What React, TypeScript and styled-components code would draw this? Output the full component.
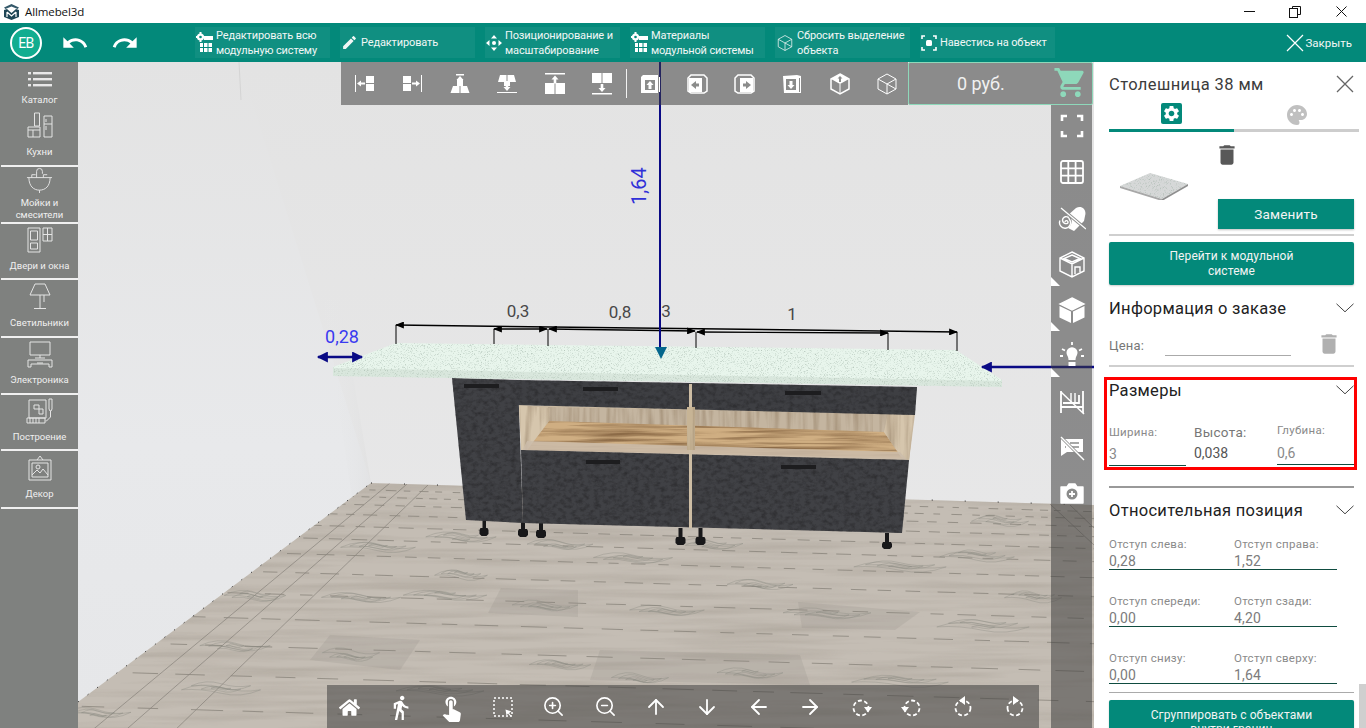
import React from 'react';
import styled, { createGlobalStyle } from 'styled-components';
import { MdUndo, MdRedo, MdEdit, MdDirectionsWalk, MdTouchApp, MdDelete, MdShoppingCart, MdSettings, MdPalette } from 'react-icons/md';
import { FaHome } from 'react-icons/fa';
import { ZoomIn, ZoomOut, ArrowUp, ArrowDown, ArrowLeft, ArrowRight } from 'lucide-react';

const Global = createGlobalStyle`
  html, body { margin: 0; padding: 0; height: 100%; overflow: hidden; background: #fff; }
  body { font-family: Roboto, "Noto Sans", sans-serif; }
  #root { height: 100%; }
  * { box-sizing: border-box; }
`;

const TEAL = '#03897a';

const Page = styled.div`
  width: 1366px; height: 728px; display: flex; flex-direction: column; overflow: hidden; position: relative;
`;
const TitleBar = styled.div`
  height: 23px; display: flex; align-items: center; padding-left: 3px; background: #fff; flex: none;
`;
const AppName = styled.span`
  font: 11.5px "Open Sans", "Noto Sans", sans-serif; color: #111; margin-left: 5px; letter-spacing: -0.1px;
`;
const WinControls = styled.div`
  margin-left: auto; margin-right: 2px; display: flex; height: 23px;
`;
const WinBtn = styled.div`
  width: 46px; display: flex; align-items: center; justify-content: center; color: #111;
`;
const Header = styled.header`
  height: 39px; background: ${TEAL}; display: flex; align-items: center; flex: none; position: relative;
`;
const Avatar = styled.div`
  width: 32px; height: 32px; margin-left: 10px; border-radius: 50%; border: 2px solid #fff; background: #12ad90;
  color: #fff; font-size: 14px; display: flex; align-items: center; justify-content: center; letter-spacing: -.5px; flex: none;
`;
const HistoryBtn = styled.div<{ $ml?: number }>`
  width: 50px; display: flex; justify-content: center; color: #fff; flex: none; margin-left: ${p => p.$ml ?? 0}px;
`;
const ActionRow = styled.div`
  display: flex; gap: 10px; margin-left: 45px; align-items: center;
`;
const ActionBtn = styled.div`
  width: 135px; height: 31px; background: rgba(255,255,255,.055); display: flex; align-items: center; gap: 3px;
  color: #f2f7f6; font-size: 11px; line-height: 15px; padding-left: 1px; white-space: nowrap; letter-spacing: -.13px;
  svg { flex: none; }
`;
const CloseBtn = styled.div`
  margin-left: auto; margin-right: 14px; display: flex; align-items: center; gap: 2px; color: #f2f7f6; font-size: 11.5px;
`;
const Main = styled.div`
  flex: 1; display: flex; min-height: 0;
`;
const Sidebar = styled.nav`
  width: 78px; flex: none; background: #7f817f; display: flex; flex-direction: column;
`;
const SideItem = styled.div<{ $h: number; $pb: number; $line?: boolean }>`
  height: ${p => p.$h}px; padding-bottom: ${p => p.$pb}px; display: flex; flex-direction: column; align-items: center;
  border-bottom: ${p => (p.$line ? '2px solid #f0f0f0' : 'none')}; margin-left: 1px; flex: none;
`;
const SideIcon = styled.div`
  flex: 1; display: flex; align-items: center; justify-content: center; margin-bottom: 4px; min-height: 0;
`;
const SideLabel = styled.div`
  font-size: 9.5px; line-height: 12px; color: #f0f0f0; text-align: center; white-space: pre-line;
`;
const Stage = styled.div`
  flex: 1; position: relative; overflow: hidden; background: #e6e6e6;
`;
const SceneSvg = styled.svg`
  position: absolute; inset: 0; width: 100%; height: 100%; display: block;
`;
const TopOverlay = styled.div`
  position: absolute; left: 263px; top: 0; height: 43px; display: flex;
`;
const BAR = 'rgba(61,61,61,.53)';
const TopTools = styled.div`
  width: 567px; height: 43px; background: ${BAR}; display: flex; align-items: center;
`;
const TopTool = styled.div`
  width: 47.5px; height: 43px; display: flex; align-items: center; justify-content: center; color: #fff; flex: none;
`;
const ToolDivider = styled.div`
  width: 1px; height: 29px; background: #f2f2f2; margin-right: -1px; flex: none;
`;
const PriceBox = styled.div`
  width: 185px; height: 43px; background: ${BAR}; border: 1px solid #8ed8ba; border-radius: 2px; position: relative;
  display: flex; align-items: center; color: #f1f1f1; font-size: 18px; padding-left: 48px;
`;
const CartBadge = styled.div`
  position: absolute; right: 4px; top: 2px; color: #8ed8ba; line-height: 0;
`;
const RightTools = styled.div`
  position: absolute; right: 2px; top: 43px; bottom: 0; width: 41px; background: ${BAR};
  display: flex; flex-direction: column; align-items: center;
`;
const RightToolList = styled.div`
  margin-top: -2px; display: flex; flex-direction: column; align-items: center;
`;
const RightTool = styled.div`
  height: 45.9px; width: 41px; display: flex; align-items: center; justify-content: center; color: #fff; position: relative;
`;
const CornerMark = styled.span`
  position: absolute; left: 0; bottom: 1px; width: 0; height: 0;
  border-left: 9px solid #fff; border-top: 9px solid transparent;
`;
const BottomTools = styled.div`
  position: absolute; left: 249px; bottom: 0; width: 712px; height: 43px; background: ${BAR}; display: flex; align-items: center;
`;
const BottomList = styled.div`
  display: flex; align-items: center; margin-left: -3.5px; margin-top: 1px;
`;
const BottomTool = styled.div`
  width: 51.2px; display: flex; justify-content: center; color: #fff; flex: none;
`;
const Panel = styled.aside`
  width: 272px; flex: none; background: #fff; padding-left: 15px; overflow: hidden; position: relative;
`;
const PanelInner = styled.div`
  width: 245px;
`;
const TitleRow = styled.div`
  height: 44px; display: flex; align-items: center; justify-content: space-between;
`;
const Title = styled.h1`
  margin: 0; font-size: 16.5px; font-weight: 400; color: #3c3c3c; letter-spacing: .4px; white-space: nowrap;
`;
const Tabs = styled.div`
  width: 250px; height: 30px; margin-top: -4px; display: flex;
`;
const Tab = styled.div<{ $on?: boolean }>`
  flex: 1; display: flex; justify-content: center; align-items: flex-start; padding-top: 1px;
  border-bottom: 3px solid ${p => (p.$on ? TEAL : '#cdcdcd')};
  color: ${p => (p.$on ? TEAL : '#c0c0c0')};
`;
const GearBox = styled.div`
  width: 21px; height: 21px; background: ${TEAL}; border-radius: 2px; display: flex; align-items: center; justify-content: center; color: #fff;
`;
const ReplaceRow = styled.div`
  height: 104px; display: flex; border-bottom: 2px solid #cfcfcf; position: relative;
`;
const Thumb = styled.div`
  width: 109px; padding: 40px 0 0 10px;
`;
const ReplaceCol = styled.div`
  flex: 1; display: flex; flex-direction: column; justify-content: space-between; padding-bottom: 5px;
`;
const DarkTrash = styled.div`
  color: #585858; height: 50px; padding-top: 10px; margin-left: -4px; line-height: 0;
`;
const ReplaceBtn = styled.div`
  height: 30px; background: ${TEAL}; color: #f4f4f4; font-size: 13.5px; display: flex; align-items: center; justify-content: center;
  box-shadow: 0 1px 2px rgba(0,0,0,.25); letter-spacing: .2px;
`;
const WideBtn = styled.div<{ $mt: number; $h: number }>`
  height: ${p => p.$h}px; margin-top: ${p => p.$mt}px; background: ${TEAL}; color: #f4f4f4; border-radius: 2px; font-size: 12px; line-height: 14.5px;
  display: flex; align-items: center; justify-content: center; text-align: center; box-shadow: 0 1px 2px rgba(0,0,0,.2); letter-spacing: .1px;
  padding: 0 40px;
`;
const SectionHead = styled.div<{ $mt: number }>`
  display: flex; justify-content: space-between; align-items: center; height: 22px; margin-top: ${p => p.$mt}px;
  font-size: 16.5px; color: #222; letter-spacing: .3px; white-space: nowrap;
`;
const PriceRow = styled.div`
  height: 42px; margin-top: 6px; display: flex; align-items: flex-start; border-bottom: 2px solid #cfcfcf; position: relative;
`;
const PriceLabel = styled.span`
  font-size: 13px; color: #777; margin-top: 13px; letter-spacing: .2px; width: 56px;
`;
const PriceInput = styled.span`
  width: 126px; height: 31px; border-bottom: 1px solid #aaa;
`;
const GrayTrash = styled.div`
  color: #b0b0b0; margin: 6px 0 0 25px; line-height: 0;
`;
const Highlight = styled.section`
  margin: 10px -3px 0 -5px; height: 93px; border: 3px solid #f00; padding: 0 0 0 2px; width: 253px; position: relative;
`;
const SizeGrid = styled.div`
  display: grid; grid-template-columns: 85px 83px 77px; margin-top: 21px;
`;
const SizeCell = styled.div<{ $mt?: number }>`
  margin-top: ${p => p.$mt ?? 0}px;
`;
const FieldLabel = styled.div`
  font-size: 11.5px; line-height: 14px; color: #8a8a8a; letter-spacing: .3px; white-space: nowrap;
`;
const BigLabel = styled.div`
  font-size: 13.5px; line-height: 16px; color: #777; letter-spacing: .3px;
`;
const FieldValue = styled.div<{ $w: number; $pt: number }>`
  width: ${p => p.$w}px; font-size: 14px; line-height: 17px; padding: ${p => p.$pt}px 0 2px; color: #8a8a8a; border-bottom: 1px solid #0f4c40;
`;
const StaticValue = styled.div`
  font-size: 14px; line-height: 17px; margin-top: 5px; color: #555;
`;
const Rule = styled.div<{ $mt: number; $c: string; $t: number }>`
  margin-top: ${p => p.$mt}px; height: ${p => p.$t}px; background: ${p => p.$c};
`;
const OffsetGrid = styled.div`
  display: grid; grid-template-columns: 125px 103px; row-gap: 24px; margin-top: 16px;
`;
const OffsetValue = styled.div`
  font-size: 14px; line-height: 15px; padding-top: 2px; margin-top: 1px; color: #7c7c7c; border-bottom: 1px solid #0f4c40; height: 18px; letter-spacing: .2px;
`;
const ScrollThumb = styled.div`
  position: absolute; right: 0; bottom: 0; width: 7px; height: 44px; background: #cfcfcf;
`;

const Chevron = () => (
  <svg width="18" height="10" viewBox="0 0 18 10" fill="none" stroke="#444" strokeWidth="1"><path d="M.5 .8 9 8.8 17.5 .8" /></svg>
);
const Cross = ({ s = 18, c = '#666', w = 1.3 }: { s?: number; c?: string; w?: number }) => (
  <svg width={s} height={s} viewBox="0 0 18 18" fill="none" stroke={c} strokeWidth={w}><path d="M1 1 17 17M17 1 1 17" /></svg>
);

const Logo = () => (
  <svg width="17" height="16" viewBox="0 0 17 16">
    <path d="M8.5 0 16 3.4 14.6 5 8.5 2.4 2.4 5 1 3.4Z" fill="#35596a" />
    <path d="M1 6 4 5 8.5 9 13 5 16 6V13L8.5 16 1 13Z" fill="#1f4656" />
    <path d="M4 8V13M13 8V13M4 8 8.5 12 13 8" stroke="#fff" strokeWidth="1.2" fill="none" />
  </svg>
);

const SideSvg = ({ w = 30, h = 28, dw, dh, children }: { w?: number; h?: number; dw?: number; dh?: number; children: React.ReactNode }) => (
  <svg width={dw ?? w} height={dh ?? h} viewBox={`0 0 ${w} ${h}`} fill="none" stroke="#e4e4e4" strokeWidth="1">{children}</svg>
);
const sideIcons: React.ReactNode[] = [
  <svg key="c" width="24" height="22" viewBox="0 0 24 22" style={{ marginTop: 8 }} fill="#e8e8e8"><rect x="0" y="3" width="3" height="2.4" /><rect x="5" y="3" width="19" height="2.4" /><rect x="0" y="9" width="3" height="2.4" /><rect x="5" y="9" width="19" height="2.4" /><rect x="0" y="15" width="3" height="2.4" /><rect x="5" y="15" width="19" height="2.4" /></svg>,
  <SideSvg key="k" w={26} h={26}><path d="M7.5 1h5v13h-5zM1 15h12v10H1zM1 18h12M6 18v7M17 4h8v21h-8zM17 12h8M19 7v3M19 14v4" /></SideSvg>,
  <SideSvg key="s" w={28} h={28} dw={27} dh={27}><path d="M1 11h26M3 11c0 9 5 13 11 13s11-4 11-13M14 24v3M11 11V4.500a3 3 0 0 1 6 0V7M6 11V8h4M18 11V8h4" /></SideSvg>,
  <SideSvg key="d" w={26} h={26}><path d="M1 1h12v24H1zM3.500 4h7v9h-7zM3.500 16h7v6h-7zM16 1h9v13h-9zM20.500 1v13M16 7.500h9" /></SideSvg>,
  <SideSvg key="l" w={22} h={27}><path d="M6 1h10l5 11H1zM11 12v13M5 25.500h12M15 12v7" /></SideSvg>,
  <SideSvg key="t" w={26} h={27}><path d="M3 1h20v13H3zM13 14v3M8 17h10M1 19h24v7h-3v-3H4v3H1zM10 22h6" /></SideSvg>,
  <SideSvg key="b" w={28} h={27}><path d="M3 2h17v18H3zM8 7h5v4h4v5h-4v-5H8zM1 20h18v5H1zM4 20v5M7 20v5M10 20v5M13 20v5M23 1h3v10l-1 2h-1l-1-2zM24.500 13v6l-4 4h-1" /></SideSvg>,
  <SideSvg key="f" w={24} h={27}><path d="M1 6h22v20H1zM4 9h16v14H4zM9 6l3-4 3 4M4 21l5-5 3 3 3-4 5 6" /><circle cx="10" cy="13" r="2" /></SideSvg>,
];
const sideItems = [
  { t: 'Каталог', h: 46, pb: 2, line: false },
  { t: 'Кухни', h: 59, pb: 7, line: true },
  { t: 'Мойки и\nсмесители', h: 57, pb: 1, line: true },
  { t: 'Двери и окна', h: 56, pb: 6, line: true },
  { t: 'Светильники', h: 58, pb: 7, line: true },
  { t: 'Электроника', h: 57, pb: 7, line: true },
  { t: 'Построение', h: 56, pb: 6, line: true },
  { t: 'Декор', h: 58, pb: 7, line: true },
];

const ModuleIcon = () => (
  <svg width="17" height="21" viewBox="0 0 17 21" fill="#fff">
    <circle cx="4.500" cy="5" r="3.600" /><circle cx="4.500" cy="5" r="1.300" fill={TEAL} />
    <path d="M3.500 0h2v2h-2zM3.500 8h2v2h-2zM0 4h2v2H0zM7 4h2v2H7z" />
    <rect x="8" y="4" width="9" height="4" />
    <rect x="4" y="11" width="12" height="9" /><path d="M7.500 11v9M12 11v9M4 15.500h12" stroke={TEAL} strokeWidth="1" />
  </svg>
);
const MoveIcon = () => (
  <svg width="16" height="16" viewBox="0 0 16 16" fill="#fff">
    <path d="M8 0 11 3.500H5zM8 16l3-3.500H5zM0 8l3.500-3v6zM16 8l-3.500-3v6z" /><circle cx="8" cy="8" r="2" />
  </svg>
);
const CubeWire = ({ s = 18, w = 1 }: { s?: number; w?: number }) => (
  <svg width={s} height={s} viewBox="0 0 24 24" fill="none" stroke="currentColor" strokeWidth={w}>
    <path d="M12 2 21 7V17L12 22 3 17V7ZM3 7 12 12 21 7M12 12V22M12 12 21 17" />
  </svg>
);
const TargetIcon = () => (
  <svg width="16" height="16" viewBox="0 0 16 16" fill="none" stroke="#fff" strokeWidth="1.600">
    <path d="M1 4V1h3M12 1h3v3M15 12v3h-3M4 15H1v-3" /><rect x="5" y="5" width="6" height="6" rx="1.500" fill="#fff" stroke="none" />
  </svg>
);

const T = ({ children }: { children: React.ReactNode }) => (
  <svg width="24" height="24" viewBox="0 0 24 24" fill="#fff">{children}</svg>
);
const up = (x: number, y: number) => `M${x} ${y}l-3.500 4h2.200v4h2.600v-4h2.200z`;
const down = (x: number, y: number) => `M${x} ${y}l-3.500-4h2.200v-4h2.600v4h2.200z`;
const topIcons: React.ReactNode[] = [
  <T key="1"><rect x="2" y="3" width="1" height="17" /><path d="M4 11.500 8 8.500v2h4v2H8v2z" /><rect x="13" y="4" width="8" height="7" /><rect x="13" y="12" width="8" height="7" /></T>,
  <T key="2"><rect x="21" y="3" width="1" height="17" /><path d="M20 11.500 16 8.500v2h-4v2h4v2z" /><rect x="3" y="4" width="8" height="7" /><rect x="3" y="12" width="8" height="7" /></T>,
  <T key="3"><rect x="8" y="2" width="8" height="1.500" /><path d={up(12, 4)} /><rect x="9" y="7" width="6" height="7" /><path d="M5 14h6.500v7H2.500zM12.500 14H19l2.500 7h-9z" /></T>,
  <T key="4"><rect x="2" y="20" width="20" height="1" /><path d="M5 3h6.500v7H3zM12.500 3H19l2 7h-8.500z" /><rect x="9" y="9" width="6" height="5" /><path d={down(12, 19)} /></T>,
  <T key="5"><rect x="2" y="1" width="20" height="1.500" /><path d={up(12, 3.500)} /><rect x="2" y="11" width="9.500" height="11" /><rect x="12.500" y="11" width="9.500" height="11" /></T>,
  <T key="6"><rect x="2" y="1" width="9.500" height="10" /><rect x="12.500" y="1" width="9.500" height="10" /><path d={down(12, 20)} /><rect x="2" y="21" width="20" height="1.500" /></T>,
  <T key="7"><path d="M5 3h15v18H3V5z" /><path d="M21.500 5v15" stroke="#fff" /><rect x="7" y="8" width="10" height="10" fill="#8b8c8b" /><path d="M12 9l-3.500 4h2v4h3v-4h2z" /></T>,
  <T key="8"><path d="M6 3h13l3 3v13l-3 2H6l-3-2V6z" fill="none" stroke="#fff" strokeWidth="1.500" /><path d="M4 6h13v14H4z" /><path d="M6 13l5-4v2.500h3v3h-3V17z" fill="#8b8c8b" /></T>,
  <T key="9"><path d="M5 3h13l3 3v13l-3 2H5l-3-2V6z" fill="none" stroke="#fff" strokeWidth="1.500" /><path d="M7 6h13v14H7z" /><path d="M18 13l-5-4v2.500h-3v3h3V17z" fill="#8b8c8b" /></T>,
  <T key="10"><path d="M3 4 17 3l4 1V21H4z" /><path d="M19.500 6v14" stroke="#8b8c8b" /><rect x="6" y="7" width="10" height="11" fill="#8b8c8b" /><path d="M11 17l3.500-4h-2V9h-3v4h-2z" /></T>,
  <T key="11"><path d="M12 2 21 7V17L12 22 3 17V7Z" fill="none" stroke="#fff" strokeWidth="1.500" /><path d="M12 2 21 7 12 12 3 7Z" /><path d="M12 12V22" stroke="#fff" /><path d="M12 4l-2.500 2.500h1.500V10h2V6.500h1.500z" fill="#8b8c8b" /></T>,
  <span key="12" style={{ display: 'flex', color: '#fff' }}><CubeWire s={24} /></span>,
];

const Spin = ({ flip, top }: { flip?: boolean; top?: boolean }) => (
  <svg width="22" height="22" viewBox="0 0 22 22" fill="none" stroke="#fff" strokeWidth="1.800" style={flip ? { transform: 'scaleX(-1)' } : undefined}>
    <circle cx="11" cy="12" r="7.500" strokeDasharray="4 2.400" />
    {top ? <path d="M13 0v9L7 4.500z" fill="#fff" stroke="none" /> : <path d="M14 11h8l-4 5.500z" fill="#fff" stroke="none" />}
  </svg>
);
const SelectIcon = () => (
  <svg width="22" height="22" viewBox="0 0 22 22" fill="none" stroke="#fff">
    <rect x="2" y="2" width="18" height="18" strokeWidth="1.500" strokeDasharray="2 2" />
    <path d="M13.500 13.500 19.500 15.500 17 17 19.500 20 18.500 20.500 16 17.500 14.500 19.500Z" fill="#fff" stroke="none" />
  </svg>
);
const bottomIcons: React.ReactNode[] = [
  <FaHome key="h" size={21} />,
  <MdDirectionsWalk key="w" size={27} />,
  <MdTouchApp key="t" size={29} />,
  <SelectIcon key="s" />,
  <ZoomIn key="zi" size={23} strokeWidth={1.700} style={{ transform: 'translateY(-1px)' }} />,
  <ZoomOut key="zo" size={23} strokeWidth={1.700} style={{ transform: 'translateY(-1px)' }} />,
  <ArrowUp key="au" size={24} strokeWidth={1.800} />,
  <ArrowDown key="ad" size={24} strokeWidth={1.800} />,
  <ArrowLeft key="al" size={24} strokeWidth={1.800} />,
  <ArrowRight key="ar" size={24} strokeWidth={1.800} />,
  <Spin key="r1" />,
  <Spin key="r2" flip />,
  <Spin key="r3" top />,
  <Spin key="r4" top flip />,
];

const R = ({ children }: { children: React.ReactNode }) => (
  <svg width="28" height="28" viewBox="0 0 28 28" fill="none" stroke="#fff" strokeWidth="1.400">{children}</svg>
);
const rightIcons: { n: React.ReactNode; mark?: boolean }[] = [
  { n: <R><path d="M4 9V4h5M19 4h5v5M24 19v5h-5M9 24H4v-5" strokeWidth="2.600" /></R> },
  { n: <R><rect x="3" y="3" width="22" height="22" rx="2" strokeWidth="1.800" /><path d="M10.300 3v22M17.600 3v22M3 10.300h22M3 17.600h22" strokeWidth="1.800" /></R> },
  { n: <R><path d="M9 12 18 4C24 1 29 6 27 12L26 17 16 27 10 24C14 21 15 16 12 13Z" fill="#fff" stroke="none" /><path d="M7 18a1.500 1.500 0 1 1 2 1.500 3.500 3.500 0 1 1 2.500-4 5.500 5.500 0 1 1-9.500 1" /><path d="M3 4l25 21" stroke="#8b8c8b" strokeWidth="3" /><path d="M3 4l25 21" stroke="#fff" strokeWidth="1.300" /></R> },
  { n: <R><path d="M14 2 26 8V21L14 27 2 21V8ZM2 8 14 14 26 8M14 5 22 8.500 14 12 6 8.500ZM14 14V27M17 24V17h5v5" /></R>, mark: true },
  { n: <R><path d="M14 2 26 8 14 14 2 8Z" fill="#fff" /><path d="M1.500 10 13 15.500V27L1.500 21.500Z M26.500 10 15 15.500V27L26.500 21.500Z" fill="#fff" stroke="none" /></R>, mark: true },
  { n: <R><path d="M9 14a5.500 5.500 0 1 1 10 0c-1 2-1.500 3-1.500 5h-7c0-2-.5-3-1.500-5z" fill="#fff" stroke="none" /><path d="M10.500 21h7v4h-7z" fill="#fff" stroke="none" /><path d="M14 1v3M4 8l3 1.500M24 8l-3 1.500M2 15h3M23 15h3" strokeWidth="1.800" /></R>, mark: true },
  { n: <R><path d="M3 4v22M25 4v22M3 20h22M5 16h16V8" strokeWidth="1.800" /><path d="M13 16V6M17 16V6" /><path d="M3 5l23 22" strokeWidth="1.500" /></R> },
  { n: <R><path d="M3 6h22v13H9l-6 4z" fill="#fff" stroke="none" /><path d="M12 10h9M12 14h9M7 14h1" stroke="#8b8c8b" strokeWidth="1.500" /><path d="M3 4l23 23" stroke="#8b8c8b" strokeWidth="3" /><path d="M3 4l23 23" /></R> },
  { n: <R><path d="M3 8h6l2-3h6l2 3h6v16H3z" fill="#fff" stroke="#fff" strokeLinejoin="round" /><circle cx="14" cy="15" r="5.500" fill="#8b8c8b" stroke="none" /><path d="M14 12v6M11 15h6" stroke="#fff" strokeWidth="1.800" /></R> },
];

function rng(seed: number) {
  let s = seed;
  return () => {
    s = (s * 16807) % 2147483647;
    return (s - 1) / 2147483646;
  };
}
const rowYs = [490, 497, 505, 515, 527, 540, 556, 575, 597, 622, 650, 680, 715];
const dashPath = (() => {
  const r = rng(12345);
  let d = '';
  rowYs.forEach(y0 => {
    const k = 0.6 + (y0 - 480) / 150;
    let x = 78 + r() * 10;
    while (x < 1094) {
      const len = (9 + r() * 8) * k;
      const y = y0 + 0.03 * (x - 371);
      d += `M${x.toFixed(1)} ${y.toFixed(1)}L${(x + len).toFixed(1)} ${(y + len * 0.03).toFixed(1)}`;
      x += len + (8 + r() * 8) * k;
    }
  });
  return d;
})();
const grainSpots: [number, number, number][] = [
  [378, 548, 34], [461, 537, 32], [255, 595, 28], [361, 597, 36], [445, 593, 38], [461, 573, 24], [545, 607, 30],
  [235, 647, 32], [351, 655, 26], [221, 688, 36], [98, 713, 30], [633, 558, 36], [710, 545, 30], [760, 585, 30],
  [827, 615, 40], [983, 625, 42], [667, 610, 34], [900, 567, 42], [977, 555, 34], [750, 673, 30], [900, 680, 44],
  [1033, 597, 26], [640, 680, 26], [560, 545, 30], [1000, 520, 26], [860, 525, 24], [440, 690, 40], [560, 665, 28],
];
const grainPath = (() => {
  const r = rng(777);
  let d = '';
  grainSpots.forEach(([cx, cy, w]) => {
    for (let i = 1; i <= 4; i++) {
      const a = (w * 1.1 * i) / 4;
      const b = 0.6 + i * 0.9;
      const off = (r() - 0.5) * 5;
      d += `M${(cx - a).toFixed(1)} ${cy + off}q${(a * 0.5).toFixed(1)} ${(-2 * b).toFixed(1)} ${a.toFixed(1)} ${(-0.6 * b).toFixed(1)}t${a.toFixed(1)} ${(0.6 * b).toFixed(1)}q${(-a * 0.5).toFixed(1)} ${(2 * b).toFixed(1)} ${(-a).toFixed(1)} ${(0.8 * b).toFixed(1)}t${(-a).toFixed(1)} ${(-0.8 * b).toFixed(1)}`;
    }
  });
  return d;
})();

const Scene = () => (
  <SceneSvg viewBox="78 62 1016 666" preserveAspectRatio="none">
    <defs>
      <linearGradient id="back" x1="0" y1="0" x2="0" y2="1"><stop offset="0" stopColor="#e3e3e3" /><stop offset="1" stopColor="#e9e9ea" /></linearGradient>
      <linearGradient id="left" x1="0" y1="0" x2="0" y2="1"><stop offset="0" stopColor="#e3e3e3" /><stop offset=".6" stopColor="#e8e9eb" /><stop offset="1" stopColor="#e6e7e9" /></linearGradient>
      <linearGradient id="corner" x1="0" y1="0" x2="1" y2="0"><stop offset="0" stopColor="#eceef0" stopOpacity="0" /><stop offset="1" stopColor="#d8d8d8" /></linearGradient>
      <filter id="speck" x="0" y="0" width="100%" height="100%" colorInterpolationFilters="sRGB">
        <feTurbulence type="fractalNoise" baseFrequency="1.300" numOctaves="2" seed="3" />
        <feColorMatrix values="0 0 0 0 .6  0 0 0 0 .68  0 0 0 0 .63  1.800 0 0 0 -.95" />
        <feComposite in2="SourceGraphic" operator="in" result="n" />
        <feMerge><feMergeNode in="SourceGraphic" /><feMergeNode in="n" /></feMerge>
      </filter>
      <filter id="stone" x="0" y="0" width="100%" height="100%" colorInterpolationFilters="sRGB">
        <feTurbulence type="fractalNoise" baseFrequency=".18 .24" numOctaves="4" seed="8" />
        <feColorMatrix values="0 0 0 0 .16  0 0 0 0 .16  0 0 0 0 .17  1.600 0 0 0 -.65" />
        <feComposite in2="SourceGraphic" operator="in" result="n" />
        <feMerge><feMergeNode in="SourceGraphic" /><feMergeNode in="n" /></feMerge>
      </filter>
      <filter id="wood" x="0" y="0" width="100%" height="100%" colorInterpolationFilters="sRGB">
        <feTurbulence type="fractalNoise" baseFrequency=".012 .3" numOctaves="3" seed="5" />
        <feColorMatrix values="0 0 0 0 .55  0 0 0 0 .42  0 0 0 0 .28  2.200 0 0 0 -.8" />
        <feComposite in2="SourceGraphic" operator="in" result="n" />
        <feMerge><feMergeNode in="SourceGraphic" /><feMergeNode in="n" /></feMerge>
      </filter>
      <filter id="planks" x="0" y="0" width="100%" height="100%" colorInterpolationFilters="sRGB">
        <feTurbulence type="fractalNoise" baseFrequency=".15 .012" numOctaves="3" seed="5" />
        <feColorMatrix values="0 0 0 0 .6  0 0 0 0 .52  0 0 0 0 .42  1.600 0 0 0 -.65" />
        <feComposite in2="SourceGraphic" operator="in" result="n" />
        <feMerge><feMergeNode in="SourceGraphic" /><feMergeNode in="n" /></feMerge>
      </filter>
      <filter id="boards" x="0" y="0" width="100%" height="100%" colorInterpolationFilters="sRGB">
        <feTurbulence type="fractalNoise" baseFrequency=".006 .12" numOctaves="3" seed="11" />
        <feColorMatrix values="0 0 0 0 .66  0 0 0 0 .63  0 0 0 0 .59  1.200 0 0 0 -.5" />
        <feComposite in2="SourceGraphic" operator="in" result="n" />
        <feMerge><feMergeNode in="SourceGraphic" /><feMergeNode in="n" /></feMerge>
      </filter>
      <clipPath id="floorClip"><path d="M78 702 371 483 1094 505V728H78Z" /></clipPath>
      <marker id="blk" viewBox="0 0 10 8" refX="9" refY="4" markerWidth="9" markerHeight="7" orient="auto-start-reverse" markerUnits="userSpaceOnUse"><path d="M0 0 10 4 0 8Z" fill="#000" /></marker>
      <marker id="navy" viewBox="0 0 10 10" refX="9" refY="5" markerWidth="12" markerHeight="11" orient="auto-start-reverse" markerUnits="userSpaceOnUse"><path d="M0 0 10 5 0 10Z" fill="#0a0a85" /></marker>
    </defs>

    <rect x="78" y="62" width="1016" height="666" fill="url(#back)" />
    <path d="M78 62H240L371 483 78 702Z" fill="url(#left)" />
    <path d="M340 300 371 483 352 497 322 300Z" fill="url(#corner)" opacity=".35" />
    <path d="M239 62 241 100" stroke="#d4d4d4" strokeWidth="1" />

    <path d="M78 702 371 483 1094 505V728H78Z" fill="#c4bdb4" filter="url(#boards)" />
    <g clipPath="url(#floorClip)">
      <path d="M501 588 578 590V617L488 613Z M798 602 920 612 895 630 802 628Z M330 635 420 640 400 670 310 660Z M600 650 800 655 810 685 590 680Z" fill="#8c877f" opacity=".18" />
      <path d="M390 483 78 742M407 484 120 735M428 485 170 735M1050 504 1094 545M1070 505 1094 528" stroke="#6e6a64" strokeWidth=".7" fill="none" opacity=".7" />
      <path d={dashPath} stroke="#8a857c" strokeWidth="1" opacity=".8" fill="none" />
      <path d={grainPath} stroke="#8a8980" strokeWidth=".8" opacity=".45" fill="none" />
    </g>
    <path d="M78 702 371 483" stroke="#222" strokeWidth="1" strokeDasharray="1 11" fill="none" />
    <path d="M371 483 1094 505" stroke="#222" strokeWidth="1" strokeDasharray="1 32" fill="none" />

    <g>
      <path d="M482.500 520h3.500v8h1.500l1 2v4l-2 2h-5l-2-2v-4l1-2h2zM521 522h4v7h2l1 2v4l-2 2h-6l-2-2v-4l1-2h2zM539 523h4v7h2l1 2v4l-2 2h-6l-2-2v-4l1-2h2zM678.500 528h4v9h2l1 2v4l-2 2h-6l-2-2v-4l1-2h2zM698.500 528h4v9h2l1 2v4l-2 2h-6l-2-2v-4l1-2h2zM885 533h4v9h2l1 2v3l-2 2h-6l-2-2v-3l1-2h2z" fill="#18181a" />
      <path d="M452 378 518 380 523 523 466 520Z" fill="#404145" filter="url(#stone)" />
      <path d="M519 405 915 414 909 461 522 450Z" fill="#c9b9a1" />
      <path d="M548 407 890 414 884 434 548 424Z" fill="#c4b5a0" filter="url(#planks)" />
      <path d="M549 421 884 432 903 458 527 450Z" fill="#cfae82" filter="url(#wood)" />
      <path d="M519 405 550 408 549 421 527 450 521 450Z M888 413 914 414 909 460 901 457 884 432Z" fill="#d6c6ad" filter="url(#planks)" />
      <path d="M527 441 900 452 908 461 522 451Z" fill="#cbbcaa" opacity=".85" />
      <path d="M516 380 917 387 915 415 516 405Z" fill="#3e3f43" filter="url(#stone)" />
      <path d="M521 450 909 460 902 533 523 523Z" fill="#404145" filter="url(#stone)" />
      <path d="M689 384H692V528H689Z" fill="#cdbda4" />
      <path d="M687 407H695V450H687Z" fill="#c7b495" filter="url(#planks)" />
      <path d="M464 384H499V388H464ZM583 387H618V391H583ZM785 391H821V395H785ZM586 460H620V464H586ZM781 465H816V469H781Z" fill="#1d1d1f" />
    </g>

    <path d="M333 367 396 343 956 350 1002 380 1002 387 333 376Z" fill="#e8f5ec" filter="url(#speck)" />
    <path d="M333 368 1002 381 1002 387 333 376Z" fill="#b5c7ba" opacity=".3" />

    <g stroke="#000" strokeWidth="1.300" fill="none">
      <path d="M396 325 957 332" strokeWidth="1.500" markerStart="url(#blk)" markerEnd="url(#blk)" />
      <path d="M494 329 547 329" markerStart="url(#blk)" markerEnd="url(#blk)" />
      <path d="M549 329 695 331" markerStart="url(#blk)" markerEnd="url(#blk)" />
      <path d="M697 332 888 333" markerStart="url(#blk)" markerEnd="url(#blk)" />
      <path d="M396 325V344M494 329V344M548 329V346M696 332V348M888 333V350M957 332V351" strokeWidth="1" />
    </g>
    <g fontFamily="Roboto, sans-serif" fontSize="17" fill="#484848" textAnchor="middle">
      <text x="518" y="317">0,3</text>
      <text x="620" y="318">0,8</text>
      <text x="666" y="317">3</text>
      <text x="792" y="320">1</text>
    </g>
    <path d="M660 62V350" stroke="#0a0a85" strokeWidth="2" />
    <path d="M655 347H667L661 359Z" fill="#04668c" />
    <text x="0" y="0" transform="translate(646 205) rotate(-90)" fontFamily="Roboto, sans-serif" fontSize="20" fill="#3030d8">1,64</text>
    <path d="M318 357H362" stroke="#0a0a85" strokeWidth="2.500" markerStart="url(#navy)" markerEnd="url(#navy)" />
    <text x="342" y="343" textAnchor="middle" fontFamily="Roboto, sans-serif" fontSize="18" fill="#3a3af0">0,28</text>
    <path d="M982 367H1094" stroke="#0a0a85" strokeWidth="2.500" markerStart="url(#navy)" />
  </SceneSvg>
);

const offsets = [
  ['Отступ слева:', '0,28'], ['Отступ справа:', '1,52'],
  ['Отступ спереди:', '0,00'], ['Отступ сзади:', '4,20'],
  ['Отступ снизу:', '0,00'], ['Отступ сверху:', '1,64'],
];

export default function App() {
  return (
    <Page>
      <Global />
      <TitleBar>
        <Logo />
        <AppName>Allmebel3d</AppName>
        <WinControls>
          <WinBtn><svg width="11" height="3" viewBox="0 0 11 3"><path d="M0 1.500H11" stroke="#111" /></svg></WinBtn>
          <WinBtn><svg width="12" height="12" viewBox="0 0 12 12" fill="none" stroke="#111"><path d="M3.500 2.500V.5H11.500V8.500H9" /><rect x=".5" y="2.500" width="8" height="9" /></svg></WinBtn>
          <WinBtn><svg width="11" height="11" viewBox="0 0 11 11" stroke="#111"><path d="M.5 .5 10.500 10.500M10.500 .5 .5 10.500" /></svg></WinBtn>
        </WinControls>
      </TitleBar>
      <Header>
        <Avatar>EB</Avatar>
        <HistoryBtn $ml={8}><MdUndo size={28} /></HistoryBtn>
        <HistoryBtn><MdRedo size={28} /></HistoryBtn>
        <ActionRow>
          <ActionBtn><ModuleIcon /><span>Редактировать всю<br />модульную систему</span></ActionBtn>
          <ActionBtn><MdEdit size={17} /><span>Редактировать</span></ActionBtn>
          <ActionBtn><MoveIcon /><span>Позиционирование и<br />масштабирование</span></ActionBtn>
          <ActionBtn><ModuleIcon /><span>Материалы<br />модульной системы</span></ActionBtn>
          <ActionBtn><CubeWire s={18} /><span>Сбросить выделение<br />объекта</span></ActionBtn>
          <ActionBtn><TargetIcon /><span>Навестись на объект</span></ActionBtn>
        </ActionRow>
        <CloseBtn><Cross s={18} c="#fff" w={1.2} /><span>Закрыть</span></CloseBtn>
      </Header>
      <Main>
        <Sidebar>
          {sideItems.map((s, i) => (
            <SideItem key={s.t} $h={s.h} $pb={s.pb} $line={s.line}>
              <SideIcon>{sideIcons[i]}</SideIcon>
              <SideLabel>{s.t}</SideLabel>
            </SideItem>
          ))}
        </Sidebar>
        <Stage>
          <Scene />
          <TopOverlay>
            <TopTools>
              {topIcons.map((n, i) => (
                <React.Fragment key={i}>
                  {i === 6 && <ToolDivider />}
                  <TopTool>{n}</TopTool>
                </React.Fragment>
              ))}
            </TopTools>
            <PriceBox>
              0 руб.
              <CartBadge><MdShoppingCart size={35} /></CartBadge>
            </PriceBox>
          </TopOverlay>
          <RightTools>
            <RightToolList>
              {rightIcons.map((r, i) => (
                <RightTool key={i}>
                  {r.n}
                  {r.mark && <CornerMark />}
                </RightTool>
              ))}
            </RightToolList>
          </RightTools>
          <BottomTools>
            <BottomList>
              {bottomIcons.map((n, i) => <BottomTool key={i}>{n}</BottomTool>)}
            </BottomList>
          </BottomTools>
        </Stage>
        <Panel>
          <PanelInner>
            <TitleRow>
              <Title>Столешница 38 мм</Title>
              <Cross s={18} c="#666" w={1.3} />
            </TitleRow>
            <Tabs>
              <Tab $on><GearBox><MdSettings size={19} /></GearBox></Tab>
              <Tab><MdPalette size={24} /></Tab>
            </Tabs>
            <ReplaceRow>
              <Thumb>
                <svg width="70" height="28" viewBox="0 0 70 28">
                  <path d="M1 14 31 1 69 12 43 27Z" fill="#d6d8d8" filter="url(#speck)" />
                  <path d="M1 14 43 27 43 29 1 16Z" fill="#a8a8a8" />
                  <path d="M43 27 69 12 69 14 43 29Z" fill="#8f8f8f" />
                </svg>
              </Thumb>
              <ReplaceCol>
                <DarkTrash><MdDelete size={26} /></DarkTrash>
                <ReplaceBtn>Заменить</ReplaceBtn>
              </ReplaceCol>
            </ReplaceRow>
            <WideBtn $mt={6} $h={43}>Перейти к модульной системе</WideBtn>
            <SectionHead $mt={12}>Информация о заказе<Chevron /></SectionHead>
            <PriceRow>
              <PriceLabel>Цена:</PriceLabel>
              <PriceInput />
              <GrayTrash><MdDelete size={26} /></GrayTrash>
            </PriceRow>
            <Highlight>
              <SectionHead $mt={-1}>Размеры<Chevron /></SectionHead>
              <SizeGrid>
                <SizeCell $mt={3}>
                  <FieldLabel>Ширина:</FieldLabel>
                  <FieldValue $w={77} $pt={7}>3</FieldValue>
                </SizeCell>
                <SizeCell $mt={2}>
                  <BigLabel>Высота:</BigLabel>
                  <StaticValue>0,038</StaticValue>
                </SizeCell>
                <SizeCell $mt={1}>
                  <FieldLabel>Глубина:</FieldLabel>
                  <FieldValue $w={77} $pt={8}>0,6</FieldValue>
                </SizeCell>
              </SizeGrid>
            </Highlight>
            <Rule $mt={16} $c="#999" $t={2} />
            <SectionHead $mt={11}>Относительная позиция<Chevron /></SectionHead>
            <OffsetGrid>
              {offsets.map(([l, v]) => (
                <div key={l}>
                  <FieldLabel>{l}</FieldLabel>
                  <OffsetValue>{v}</OffsetValue>
                </div>
              ))}
            </OffsetGrid>
            <Rule $mt={8} $c="#aaa" $t={1} />
            <WideBtn $mt={7} $h={44}>Сгруппировать с объектами внутри границ</WideBtn>
          </PanelInner>
          <ScrollThumb />
        </Panel>
      </Main>
    </Page>
  );
}
